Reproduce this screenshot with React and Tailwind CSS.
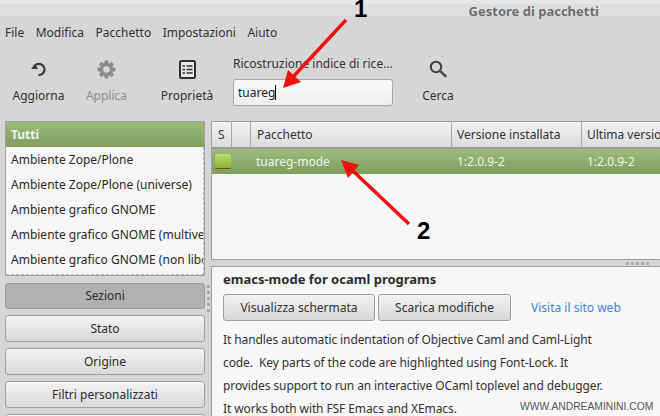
const categories = [
  "Ambiente Zope/Plone",
  "Ambiente Zope/Plone (universe)",
  "Ambiente grafico GNOME",
  "Ambiente grafico GNOME (multiverse)",
  "Ambiente grafico GNOME (non libero)",
];

const filters = ["Stato", "Origine", "Filtri personalizzati"];

const description = [
  "It handles automatic indentation of Objective Caml and Caml-Light",
  "code.  Key parts of the code are highlighted using Font-Lock. It",
  "provides support to run an interactive OCaml toplevel and debugger.",
  "It works both with FSF Emacs and XEmacs.",
];

const buttonBg = "bg-gradient-to-b from-[#f4f4f4] to-[#d8d8d8] border border-[#a0a0a0] rounded-[3px]";

function Tool({ icon, label, className, muted }) {
  return (
    <div className={`flex flex-col items-center shrink-0 ${className}`}>
      <div className="h-[36px] flex items-center justify-center">{icon}</div>
      <span className={muted ? "text-[#8e8e8e]" : "text-[#333]"}>{label}</span>
    </div>
  );
}

function Grip({ vertical }) {
  return (
    <div className={`flex ${vertical ? "flex-col gap-[3px]" : "gap-[2px]"}`}>
      {[0, 1, 2, 3, 4].map((i) => (
        <span key={i} className="w-[3px] h-[3px] bg-[#aaaaaa]" />
      ))}
    </div>
  );
}

function RefreshIcon() {
  return (
    <svg width="18" height="18" viewBox="0 0 18 18">
      <path d="M5.5 5 A5.6 5.6 0 1 1 8.5 15" fill="none" stroke="#3c3c3c" strokeWidth="2.2" />
      <polygon points="1,9 8,9 5,3.5" fill="#3c3c3c" />
    </svg>
  );
}

function GearIcon() {
  return (
    <svg width="19" height="19" viewBox="0 0 19 19">
      <g fill="#8b8b8b">
        {[0, 45, 90, 135, 180, 225, 270, 315].map((a) => (
          <rect key={a} x="7.5" y="0.5" width="4" height="5" rx="0.8" transform={`rotate(${a} 9.5 9.5)`} />
        ))}
      </g>
      <circle cx="9.5" cy="9.5" r="5" fill="none" stroke="#8b8b8b" strokeWidth="3.4" />
    </svg>
  );
}

function PropsIcon() {
  return (
    <svg width="17" height="19" viewBox="0 0 17 19">
      <rect x="1" y="1" width="15" height="17" rx="1.5" fill="#e8e8e8" stroke="#2f2f2f" strokeWidth="2" />
      <path d="M3.5 6h2.5M7.5 6h6M3.5 9.5h2.5M7.5 9.5h6M3.5 13h2.5M7.5 13h6" stroke="#2f2f2f" strokeWidth="1.6" />
    </svg>
  );
}

function SearchIcon() {
  return (
    <svg width="18" height="18" viewBox="0 0 18 18">
      <circle cx="7" cy="7" r="5.2" fill="none" stroke="#3f3f3f" strokeWidth="2" />
      <path d="M11 11 L16.5 16" stroke="#555" strokeWidth="2.8" strokeLinecap="round" />
    </svg>
  );
}

export default function App() {
  return (
    <div
      className="relative w-[660px] h-[416px] overflow-hidden bg-[#d6d6d6] text-[12px] text-[#2d2d2d]"
      style={{ fontFamily: '"Noto Sans", sans-serif' }}
    >
      <div className="h-[16px] bg-[#dedede] border-t-[4px] border-[#e6e6e6] flex justify-end pr-[61px]">
        <span className="text-[13px] font-bold text-[#6e6e6e] leading-[14px]">Gestore di pacchetti</span>
      </div>

      <div className="h-[34px] flex items-center gap-[11.5px] pl-[5px] text-[#333] leading-none">
        <span>File</span>
        <span>Modifica</span>
        <span>Pacchetto</span>
        <span>Impostazioni</span>
        <span>Aiuto</span>
      </div>

      <div className="h-[71px] flex pt-[1px]">
        <Tool className="w-[77px]" label="Aggiorna" icon={<RefreshIcon />} />
        <Tool className="w-[59px]" label="Applica" muted icon={<GearIcon />} />
        <Tool className="w-[102px]" label="Proprietà" icon={<PropsIcon />} />
        <div className="w-[160px] ml-[-5px] shrink-0 flex flex-col">
          <div className="h-[22px] mt-[2px] leading-[22px] text-[#333] whitespace-nowrap">Ricostruzione indice di rice...</div>
          <div className="mt-[4px] h-[27px] bg-gradient-to-b from-[#f9f9f9] to-[#eeeeee] border border-[#a8a8a8] rounded-[3px] flex items-center pl-[4px] text-[#222]">
            tuareg
            <span className="w-px h-[15px] bg-black" />
          </div>
        </div>
        <Tool className="w-[90px]" label="Cerca" icon={<SearchIcon />} />
      </div>

      <div className="flex h-[295px] pl-[5px]">
        <div className="w-[200px] shrink-0 flex flex-col">
          <div className="h-[155px] shrink-0 bg-[#f6f6f6] border border-[#a0a0a0] overflow-hidden">
            <div className="h-[25px] bg-gradient-to-b from-[#9dbb7b] to-[#7f9e5e] flex items-center pl-[5px] font-bold text-[#f2f2f2]">
              Tutti
            </div>
            <div className="h-[128px] overflow-hidden border-r border-b border-dashed border-[#b8b8b8]">
              {categories.map((c) => (
                <div key={c} className="h-[25px] leading-[25px] pl-[5px] whitespace-nowrap text-[#2a2a2a]">
                  {c}
                </div>
              ))}
            </div>
          </div>
          <div className="mt-[7px] h-[26px] shrink-0 bg-[#b1b1b1] border border-[#9c9c9c] rounded-[3px] flex items-center justify-center">
            Sezioni
          </div>
          {filters.map((f) => (
            <div key={f} className={`mt-[6px] h-[27px] shrink-0 flex items-center justify-center ${buttonBg}`}>
              {f}
            </div>
          ))}
          <div className={`mt-[6px] h-[27px] shrink-0 ${buttonBg}`} />
        </div>

        <div className="w-[6px] shrink-0 flex flex-col items-center pt-[164px]">
          <Grip vertical />
        </div>

        <div className="flex-1 min-w-0 flex flex-col">
          <div className="h-[139px] shrink-0 bg-[#f7f7f7] border border-[#a0a0a0] border-r-0 overflow-hidden">
            <div className="h-[27px] flex bg-gradient-to-b from-[#f2f2f2] to-[#dcdcdc] border-b-[2px] border-[#9c9c9c] text-[#333] whitespace-nowrap">
              <div className="w-[20px] shrink-0 pl-[6px] leading-[25px] border-r border-[#a8a8a8]">S</div>
              <div className="w-[19px] shrink-0 border-r border-[#a8a8a8]" />
              <div className="w-[201px] shrink-0 pl-[6px] leading-[25px] border-r border-[#a8a8a8]">Pacchetto</div>
              <div className="w-[130px] shrink-0 pl-[5px] leading-[25px] border-r border-[#a8a8a8]">Versione installata</div>
              <div className="shrink-0 pl-[5px] leading-[25px]">Ultima versione</div>
            </div>
            <div className="h-[25px] flex items-center bg-gradient-to-b from-[#9dbb7b] to-[#7f9e5e] text-[#f0f0f0] whitespace-nowrap">
              <div className="w-[39px] shrink-0 pl-[3px]">
                <div className="w-[16px] h-[15px] rounded-[2px] border-b border-[#7a4a28] bg-gradient-to-b from-[#c0dc70] to-[#8cb030]" />
              </div>
              <div className="w-[201px] shrink-0 pl-[5px]">tuareg-mode</div>
              <div className="w-[130px] shrink-0 pl-[5px]">1:2.0.9-2</div>
              <div className="shrink-0 pl-[5px]">1:2.0.9-2</div>
            </div>
          </div>

          <div className="h-[6px] shrink-0 flex items-center justify-end pr-[11px]">
            <Grip />
          </div>

          <div className="flex-1 bg-[#f7f7f7] border border-[#a0a0a0] border-r-0 pl-[11px] pt-[2px] text-[#333]">
            <div className="text-[13px] font-bold leading-[20px] h-[25px] text-[#2d2d2d]">emacs-mode for ocaml programs</div>
            <div className="flex items-center h-[27px]">
              <div className="w-[152px] h-[27px] flex items-center justify-center bg-gradient-to-b from-[#f2f2f2] to-[#d8d8d8] border border-[#a0a0a0] rounded-[3px]">
                Visualizza schermata
              </div>
              <div className="ml-[3px] w-[133px] h-[27px] flex items-center justify-center bg-gradient-to-b from-[#f2f2f2] to-[#d8d8d8] border border-[#a0a0a0] rounded-[3px]">
                Scarica modifiche
              </div>
              <span className="ml-[20px] text-[#3f85d0]">Visita il sito web</span>
            </div>
            <div className="mt-[7px] leading-[23px] whitespace-pre tracking-[-0.1px]">
              {description.map((line) => (
                <div key={line} className="w-fit">{line}</div>
              ))}
            </div>
          </div>
        </div>
      </div>

      <svg className="absolute left-0 top-0 pointer-events-none" width="660" height="416">
        <line x1="346" y1="20" x2="292" y2="78" stroke="#f01010" strokeWidth="3.5" />
        <polygon points="283,88 288,70 301,82" fill="#f01010" />
        <line x1="409" y1="224" x2="352" y2="170" stroke="#f01010" strokeWidth="3.5" />
        <polygon points="341,160 359,165 348,178" fill="#f01010" />
      </svg>
      <span
        className="absolute left-[354px] top-[-5px] text-[24px] leading-[28px] font-bold text-black"
        style={{ fontFamily: '"Liberation Sans", sans-serif' }}
      >
        1
      </span>
      <span
        className="absolute left-[417px] top-[217px] text-[24px] leading-[28px] font-bold text-black"
        style={{ fontFamily: '"Liberation Sans", sans-serif' }}
      >
        2
      </span>
      <span
        className="absolute left-[520px] top-[401px] text-[10.3px] leading-[12px] text-[#555]"
        style={{ fontFamily: '"Liberation Sans", sans-serif' }}
      >
        WWW.ANDREAMININI.COM
      </span>
    </div>
  );
}
